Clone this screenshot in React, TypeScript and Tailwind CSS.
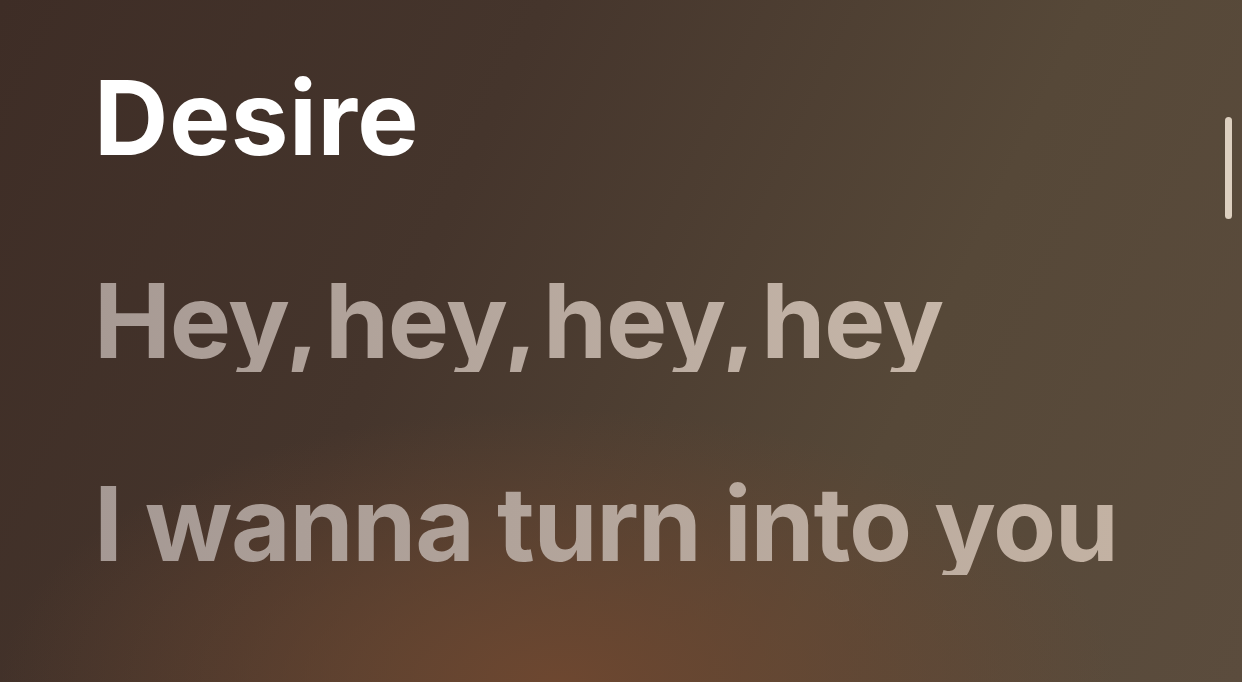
export default function App() {
  return (
    <div
      className="relative h-[682px] w-[1242px] overflow-hidden bg-[radial-gradient(ellipse_45%_40%_at_45%_100%,#6d4730_0%,rgba(109,71,48,0)_100%),linear-gradient(115deg,#3e2d26_0%,#45352c_35%,#564838_70%,#5b4c3d_100%)]"
      style={{ fontFamily: "Inter, 'Noto Sans', sans-serif" }}
    >
      <div className="flex flex-col items-start gap-[100px] pl-[94px] pt-[66px]">
        <h1 className="text-[103px] font-bold leading-none tracking-[0.005em] text-white">
          Desire
        </h1>
        <p className="bg-gradient-to-r from-[#a79a94] to-[#c6b6a8] bg-clip-text text-[103px] font-bold leading-none tracking-[-0.012em] text-transparent [word-spacing:-13px]">
          Hey, hey, hey, hey
        </p>
        <p className="bg-gradient-to-r from-[#a59994] to-[#c3b2a3] bg-clip-text text-[103px] font-bold leading-none tracking-[-0.012em] text-transparent">
          I wanna turn into you
        </p>
      </div>

      {/* scroll indicator */}
      <div className="absolute left-[1225px] top-[117px] h-[102px] w-[7px] rounded-full bg-[#ddd0c0]" />
    </div>
  );
}
